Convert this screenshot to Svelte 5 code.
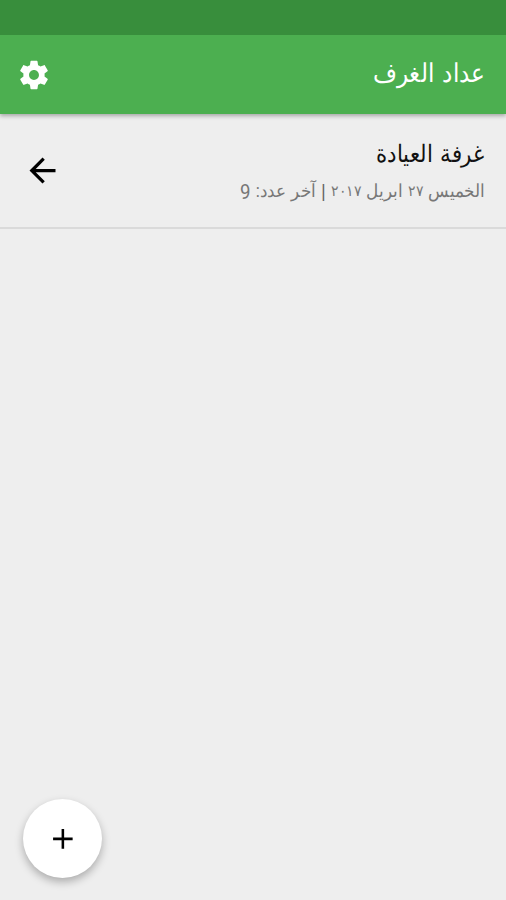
<script lang="ts">
	const rooms = [{ name: 'غرفة العيادة', weekday: 'الخميس', day: '٢٧', month: 'ابريل', year: '٢٠١٧', last: 9 }];
</script>

<div class="screen" dir="rtl">
	<div class="status"></div>
	<header>
		<h1>عداد الغرف</h1>
		<button aria-label="الإعدادات">
			<svg width="34" height="34" viewBox="0 0 24 24" fill="#fff">
				<path d="M19.43 12.98c.04-.32.07-.64.07-.98s-.03-.66-.07-.98l2.11-1.65c.19-.15.24-.42.12-.64l-2-3.46c-.12-.22-.39-.3-.61-.22l-2.49 1c-.52-.4-1.08-.73-1.69-.98l-.38-2.65C14.46 2.18 14.25 2 14 2h-4c-.25 0-.46.18-.49.42l-.38 2.65c-.61.25-1.17.59-1.69.98l-2.49-1c-.23-.09-.49 0-.61.22l-2 3.46c-.13.22-.07.49.12.64l2.11 1.65c-.04.32-.07.65-.07.98s.03.66.07.98l-2.11 1.65c-.19.15-.24.42-.12.64l2 3.46c.12.22.39.3.61.22l2.49-1c.52.4 1.08.73 1.69.98l.38 2.65c.03.24.24.42.49.42h4c.25 0 .46-.18.49-.42l.38-2.65c.61-.25 1.17-.59 1.69-.98l2.49 1c.23.09.49 0 .61-.22l2-3.46c.12-.22.07-.49-.12-.64l-2.11-1.65zM12 15.5c-1.93 0-3.5-1.57-3.5-3.5s1.57-3.5 3.5-3.5 3.5 1.57 3.5 3.5-1.57 3.5-3.5 3.5z" />
			</svg>
		</button>
	</header>

	<main>
		{#each rooms as room (room.name)}
			<div class="room">
				<div class="info">
					<h2>{room.name}</h2>
					<p>
						{room.weekday} <span class="num">{room.day}</span>
						{room.month} <span class="num">{room.year}</span>
						<span class="bar">|</span> آخر عدد: <span class="count">{room.last}</span>
					</p>
				</div>
				<svg width="39" height="39" viewBox="0 0 24 24">
					<path d="M20 11H7.83l5.59-5.59L12 4l-8 8 8 8 1.41-1.41L7.83 13H20v-2z" />
				</svg>
			</div>
		{/each}
	</main>

	<button class="fab" aria-label="إضافة غرفة">
		<svg width="34" height="34" viewBox="0 0 24 24">
			<path d="M18.8 12.8h-6v6h-1.8v-6H5V11h6V5h1.8v6h6z" />
		</svg>
	</button>
</div>

<style>
	:global(body) {
		margin: 0;
	}

	.screen {
		position: relative;
		display: flex;
		flex-direction: column;
		height: 900px;
		overflow: hidden;
		background: #eee;
		font-family: Roboto, 'Noto Sans', sans-serif;
	}

	.status {
		position: relative;
		z-index: 1;
		height: 35px;
		background: #388e3c;
	}

	header {
		display: flex;
		align-items: center;
		justify-content: space-between;
		height: 79px;
		padding: 0 21px 0 17px;
		box-sizing: border-box;
		background: #4caf50;
		box-shadow: 0 2px 4px rgba(0, 0, 0, 0.3);
	}

	h1,
	h2,
	p {
		margin: 0;
		font-weight: 400;
		white-space: nowrap;
		transform-origin: right center;
	}

	h1 {
		margin-bottom: 4px;
		color: #fff;
		font-size: 26px;
		word-spacing: 2px;
		transform: scaleX(0.89);
	}

	button {
		display: flex;
		align-items: center;
		justify-content: center;
		padding: 0;
		border: 0;
		background: none;
	}

	.room {
		display: flex;
		align-items: center;
		justify-content: space-between;
		height: 115px;
		padding: 0 22px 0 23px;
		box-sizing: border-box;
		border-bottom: 2px solid #dadada;
	}

	.info {
		padding-top: 3px;
	}

	h2 {
		color: #111;
		font-size: 24px;
		line-height: 38px;
		word-spacing: 2px;
		transform: scaleX(0.89);
	}

	p {
		color: #777;
		font-size: 18px;
		line-height: 36px;
		word-spacing: 1.2px;
		transform: scaleX(0.935);
	}

	.num {
		font-size: 15px;
		vertical-align: 1px;
	}

	.bar {
		color: #666;
		font-size: 21px;
		line-height: 1;
		vertical-align: -2px;
	}

	.count {
		font-size: 20px;
		line-height: 1;
		vertical-align: -2px;
	}

	.fab {
		position: absolute;
		left: 23px;
		bottom: 22px;
		width: 79px;
		height: 79px;
		border-radius: 50%;
		background: #fff;
		box-shadow: 0 4px 9px rgba(0, 0, 0, 0.28);
	}
</style>
